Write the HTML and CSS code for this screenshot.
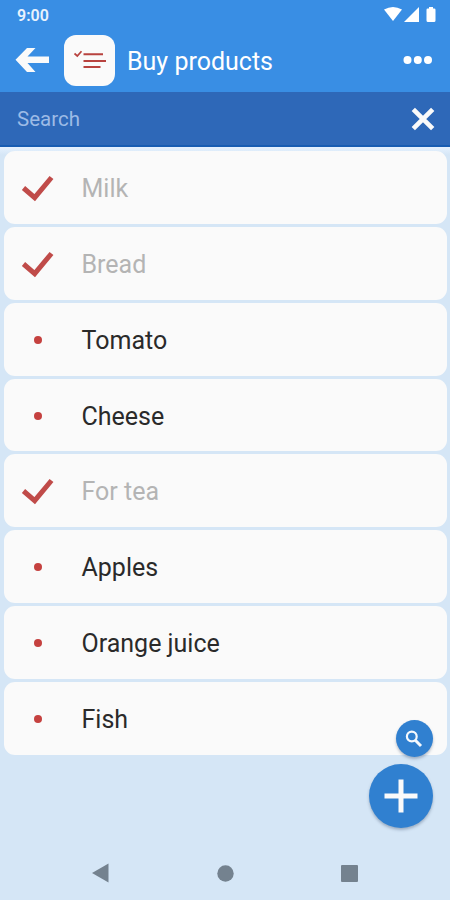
FILE: index.html
```html
<!DOCTYPE html>
<html lang="en">
<head>
<meta charset="utf-8">
<title>Buy products</title>
<link rel="stylesheet" href="styles.css">
</head>
<body>
<div class="screen">
  <header class="header">
    <div class="status">
      <span class="time">9:00</span>
      <svg class="status-icons" width="54" height="17" viewBox="0 0 54 17" fill="#fff">
        <path d="M0 3.6Q9 -1.8 18 3.6L9 15z"/>
        <path d="M35 1V16H20z"/>
        <path d="M45 1h4v1.5h1.2q1.3 0 1.3 1.3V14.500q0 1.500-1.500 1.500h-6q-1.500 0-1.500-1.500V3.800q0-1.300 1.300-1.300H45z"/>
      </svg>
    </div>
    <div class="toolbar">
      <svg class="back" width="35" height="26" viewBox="0 0 35 26" fill="#fafafa"><path d="M.5 12.800L12 1H20.500L12.500 9.500H34V16H12.500L20.500 25H12z"/></svg>
      <div class="app-icon">
        <svg width="34" height="20" viewBox="0 0 34 20" fill="none" stroke="#b8433f" stroke-width="2">
          <path d="M1.500 3.500L4.300 6L8.500 1.200" stroke-width="1.700"/>
          <path d="M10.500 4.200H30M10.500 11H33M10.500 17H27.500"/>
        </svg>
      </div>
      <h1 class="title">Buy products</h1>
      <svg class="more" width="30" height="10" viewBox="0 0 30 10" fill="#fff"><circle cx="4.500" cy="5" r="4"/><circle cx="14.800" cy="5" r="4"/><circle cx="25" cy="5" r="4"/></svg>
    </div>
  </header>
  <div class="search">
    <span>Search</span>
    <svg width="24" height="24" viewBox="0 0 24 24" stroke="#fafafa" stroke-width="4.700"><path d="M2.300 2.300L21.700 21.700M21.700 2.300L2.300 21.700"/></svg>
  </div>
  <ul class="list">
    <li class="item done"><span class="mark"><svg class="check" width="33" height="28" viewBox="0 0 33 28"><path d="M2.500 14L13.700 23.700L30.500 3.500"/></svg></span><span class="label">Milk</span></li>
    <li class="item done"><span class="mark"><svg class="check" width="33" height="28" viewBox="0 0 33 28"><path d="M2.500 14L13.700 23.700L30.500 3.500"/></svg></span><span class="label">Bread</span></li>
    <li class="item"><span class="mark"><i class="dot"></i></span><span class="label">Tomato</span></li>
    <li class="item"><span class="mark"><i class="dot"></i></span><span class="label">Cheese</span></li>
    <li class="item done"><span class="mark"><svg class="check" width="33" height="28" viewBox="0 0 33 28"><path d="M2.500 14L13.700 23.700L30.500 3.500"/></svg></span><span class="label">For tea</span></li>
    <li class="item"><span class="mark"><i class="dot"></i></span><span class="label">Apples</span></li>
    <li class="item"><span class="mark"><i class="dot"></i></span><span class="label">Orange juice</span></li>
    <li class="item"><span class="mark"><i class="dot"></i></span><span class="label">Fish</span></li>
  </ul>
  <div class="actions">
    <div class="fab small"><svg width="18" height="18" viewBox="0 0 18 18" fill="none" stroke="#f5f9fd"><circle cx="6.800" cy="6.500" r="4.900" stroke-width="2.200"/><path d="M10.300 10.200L16 16" stroke-width="3"/></svg></div>
    <div class="fab"><svg width="34" height="34" viewBox="0 0 34 34" stroke="#fafafa" stroke-width="5"><path d="M17 .5V33.500M.5 17H33.500"/></svg></div>
  </div>
  <nav class="nav">
    <svg width="17" height="20" viewBox="0 0 17 20"><path d="M0 10L16.500 .5V19.500z"/></svg>
    <svg width="17" height="17" viewBox="0 0 17 17"><circle cx="8.500" cy="8.500" r="8.200"/></svg>
    <svg width="17" height="17" viewBox="0 0 17 17"><rect width="17" height="17" rx="1"/></svg>
  </nav>
</div>
</body>
</html>
```
FILE: styles.css
```css
* { box-sizing: border-box; }
body { margin: 0; font-family: Roboto, "Liberation Sans", sans-serif; }
svg { display: block; flex: none; }
.screen {
  position: relative;
  display: flex;
  flex-direction: column;
  width: 450px;
  height: 900px;
  overflow: hidden;
  background: #d5e6f6;
}
.header { height: 92px; background: #398ee4; color: #fff; }
.status {
  display: flex;
  justify-content: space-between;
  align-items: center;
  height: 30px;
  padding: 0 13px 0 17px;
}
.time { padding-top: 1px; font-size: 16px; font-weight: 600; line-height: 30px; color: #e8f2fd; }
.status-icons { margin: -2px -1px 0 0; }
.toolbar { display: flex; align-items: center; height: 60px; padding: 0 17px 0 15px; }
.app-icon {
  display: flex;
  align-items: center;
  justify-content: center;
  width: 51px;
  height: 51px;
  margin: 1px 12px 0 14px;
  border-radius: 12px;
  background: #fafafa;
}
.app-icon svg { margin: -2px 0 0 1px; }
.title { margin: 4px 0 0; font-size: 25px; font-weight: 400; line-height: 30px; }
.more { margin-left: auto; }
.search {
  display: flex;
  align-items: center;
  justify-content: space-between;
  height: 55px;
  padding: 1px 15px 0 17px;
  border-bottom: 2px solid #175cb2;
  background: #2e68b8;
  color: #9dbbe6;
  font-size: 20.500px;
}
.list {
  display: grid;
  gap: 3px;
  margin: 0;
  padding: 4.300px 3px 0 4px;
  list-style: none;
  background: linear-gradient(#e6f1fe, #d5e6f6 8px);
}
.item {
  display: flex;
  align-items: center;
  height: 72.800px;
  padding-top: 1px;
  border-radius: 11px;
  background: #fafafa;
  color: #2a2a2a;
}
.done { color: #b4b4b4; }
.mark { display: flex; justify-content: center; width: 67px; }
.check { fill: none; stroke: #c04b49; stroke-width: 5; }
.dot { width: 8px; height: 8px; border-radius: 50%; background: #c5413f; }
.label { padding-top: 2px; margin-left: 10.500px; font-size: 25px; line-height: 30px; }
.actions {
  position: absolute;
  right: 17.500px;
  top: 720px;
  display: flex;
  flex-direction: column;
  align-items: flex-end;
  gap: 7px;
}
.fab {
  display: flex;
  align-items: center;
  justify-content: center;
  width: 64px;
  height: 64px;
  border-radius: 50%;
  background: #3080d0;
  box-shadow: 0 2px 3px rgba(50, 70, 100, .35);
}
.small { width: 37px; height: 37px; }
.nav {
  display: flex;
  align-items: center;
  justify-content: space-between;
  height: 54px;
  margin-top: auto;
  padding: 0 92px;
  fill: #74828f;
}
```
